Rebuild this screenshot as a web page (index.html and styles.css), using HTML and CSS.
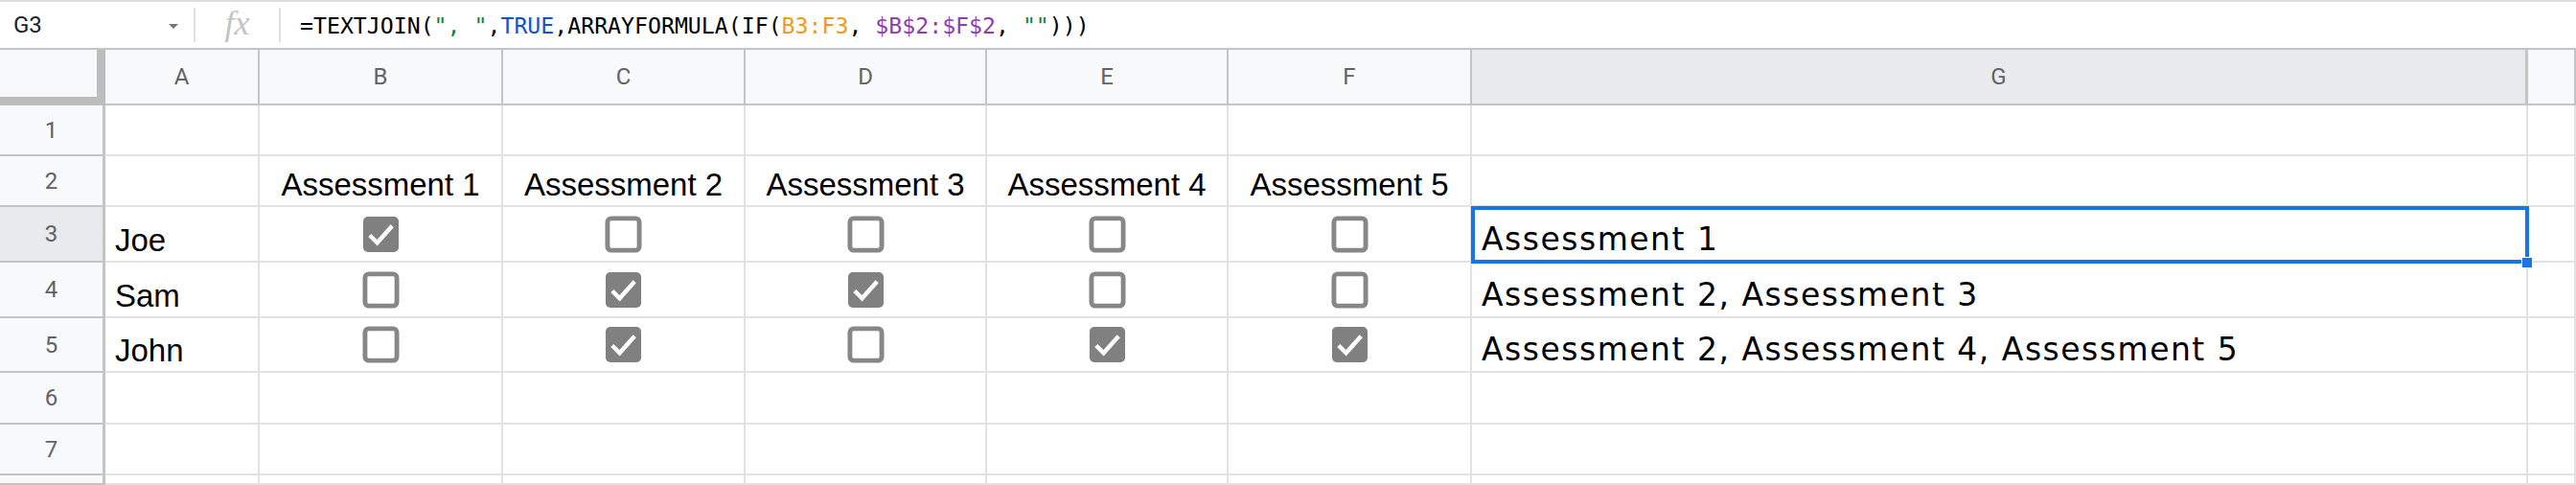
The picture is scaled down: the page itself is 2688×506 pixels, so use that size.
FILE: index.html
```html
<!DOCTYPE html>
<html lang="en">
<head>
  <meta charset="UTF-8">
  <title>Sheet - TEXTJOIN</title>
  <link rel="stylesheet" href="styles.css">
</head>
<body>
  <div class="formula-bar">
    <div class="name-box">
      <span class="cell-ref">G3</span>
      <span class="caret"></span>
    </div>
    <div class="sep"></div>
    <div class="fx">fx</div>
    <div class="sep"></div>
    <div class="formula">=TEXTJOIN(<span class="str">", "</span>,<span class="bool">TRUE</span>,ARRAYFORMULA(IF(<span class="rng1">B3:F3</span>, <span class="rng2">$B$2:$F$2</span>, <span class="str">""</span>)))</div>
  </div>

  <div class="sheet">
    <!-- column headers -->
    <div class="corner"></div>
    <div class="col-head">A</div>
    <div class="col-head">B</div>
    <div class="col-head">C</div>
    <div class="col-head">D</div>
    <div class="col-head">E</div>
    <div class="col-head">F</div>
    <div class="col-head selected">G</div>
    <div class="col-head"></div>

    <!-- row 1 -->
    <div class="row-head">1</div>
    <div class="cell"></div><div class="cell"></div><div class="cell"></div><div class="cell"></div>
    <div class="cell"></div><div class="cell"></div><div class="cell"></div><div class="cell"></div>

    <!-- row 2 -->
    <div class="row-head">2</div>
    <div class="cell"></div>
    <div class="cell center">Assessment 1</div>
    <div class="cell center">Assessment 2</div>
    <div class="cell center">Assessment 3</div>
    <div class="cell center">Assessment 4</div>
    <div class="cell center">Assessment 5</div>
    <div class="cell"></div>
    <div class="cell"></div>

    <!-- row 3 -->
    <div class="row-head selected">3</div>
    <div class="cell">Joe</div>
    <div class="cell box"><svg class="cb" viewBox="0 0 40 40"><rect x="1" y="1" width="38" height="38" rx="5" fill="#808080"/><path d="M8 21 L16 29 L32 11" fill="none" stroke="#fff" stroke-width="4.5"/></svg></div>
    <div class="cell box"><svg class="cb" viewBox="0 0 40 40"><rect x="3" y="3" width="34" height="34" rx="4" fill="#fff" stroke="#878787" stroke-width="5"/></svg></div>
    <div class="cell box"><svg class="cb" viewBox="0 0 40 40"><rect x="3" y="3" width="34" height="34" rx="4" fill="#fff" stroke="#878787" stroke-width="5"/></svg></div>
    <div class="cell box"><svg class="cb" viewBox="0 0 40 40"><rect x="3" y="3" width="34" height="34" rx="4" fill="#fff" stroke="#878787" stroke-width="5"/></svg></div>
    <div class="cell box"><svg class="cb" viewBox="0 0 40 40"><rect x="3" y="3" width="34" height="34" rx="4" fill="#fff" stroke="#878787" stroke-width="5"/></svg></div>
    <div class="cell result active">Assessment 1<span class="handle"></span></div>
    <div class="cell"></div>

    <!-- row 4 -->
    <div class="row-head">4</div>
    <div class="cell">Sam</div>
    <div class="cell box"><svg class="cb" viewBox="0 0 40 40"><rect x="3" y="3" width="34" height="34" rx="4" fill="#fff" stroke="#878787" stroke-width="5"/></svg></div>
    <div class="cell box"><svg class="cb" viewBox="0 0 40 40"><rect x="1" y="1" width="38" height="38" rx="5" fill="#808080"/><path d="M8 21 L16 29 L32 11" fill="none" stroke="#fff" stroke-width="4.5"/></svg></div>
    <div class="cell box"><svg class="cb" viewBox="0 0 40 40"><rect x="1" y="1" width="38" height="38" rx="5" fill="#808080"/><path d="M8 21 L16 29 L32 11" fill="none" stroke="#fff" stroke-width="4.5"/></svg></div>
    <div class="cell box"><svg class="cb" viewBox="0 0 40 40"><rect x="3" y="3" width="34" height="34" rx="4" fill="#fff" stroke="#878787" stroke-width="5"/></svg></div>
    <div class="cell box"><svg class="cb" viewBox="0 0 40 40"><rect x="3" y="3" width="34" height="34" rx="4" fill="#fff" stroke="#878787" stroke-width="5"/></svg></div>
    <div class="cell result">Assessment 2, Assessment 3</div>
    <div class="cell"></div>

    <!-- row 5 -->
    <div class="row-head">5</div>
    <div class="cell">John</div>
    <div class="cell box"><svg class="cb" viewBox="0 0 40 40"><rect x="3" y="3" width="34" height="34" rx="4" fill="#fff" stroke="#878787" stroke-width="5"/></svg></div>
    <div class="cell box"><svg class="cb" viewBox="0 0 40 40"><rect x="1" y="1" width="38" height="38" rx="5" fill="#808080"/><path d="M8 21 L16 29 L32 11" fill="none" stroke="#fff" stroke-width="4.5"/></svg></div>
    <div class="cell box"><svg class="cb" viewBox="0 0 40 40"><rect x="3" y="3" width="34" height="34" rx="4" fill="#fff" stroke="#878787" stroke-width="5"/></svg></div>
    <div class="cell box"><svg class="cb" viewBox="0 0 40 40"><rect x="1" y="1" width="38" height="38" rx="5" fill="#808080"/><path d="M8 21 L16 29 L32 11" fill="none" stroke="#fff" stroke-width="4.5"/></svg></div>
    <div class="cell box"><svg class="cb" viewBox="0 0 40 40"><rect x="1" y="1" width="38" height="38" rx="5" fill="#808080"/><path d="M8 21 L16 29 L32 11" fill="none" stroke="#fff" stroke-width="4.5"/></svg></div>
    <div class="cell result">Assessment 2, Assessment 4, Assessment 5</div>
    <div class="cell"></div>

    <!-- row 6 -->
    <div class="row-head">6</div>
    <div class="cell"></div><div class="cell"></div><div class="cell"></div><div class="cell"></div>
    <div class="cell"></div><div class="cell"></div><div class="cell"></div><div class="cell"></div>

    <!-- row 7 -->
    <div class="row-head">7</div>
    <div class="cell"></div><div class="cell"></div><div class="cell"></div><div class="cell"></div>
    <div class="cell"></div><div class="cell"></div><div class="cell"></div><div class="cell"></div>

    <!-- row 8 -->
    <div class="row-head"></div>
    <div class="cell"></div><div class="cell"></div><div class="cell"></div><div class="cell"></div>
    <div class="cell"></div><div class="cell"></div><div class="cell"></div><div class="cell"></div>
  </div>
</body>
</html>
```

FILE: styles.css
```css
* {
  box-sizing: border-box;
}
html, body {
  margin: 0;
  height: 506px;
  overflow: hidden;
  background: #fff;
}
body {
  font-family: "Liberation Sans", Arial, sans-serif;
}

/* formula bar */
.formula-bar {
  height: 52px;
  display: flex;
  align-items: center;
  border-top: 2px solid #dcdbe3;
  border-bottom: 2px solid #c4c4c4;
}
.name-box {
  width: 202px;
  display: flex;
  align-items: center;
  justify-content: space-between;
  padding: 0 16px 0 14px;
}
.cell-ref {
  font-family: Roboto, "Liberation Sans", sans-serif;
  font-size: 24px;
  color: #202124;
}
.caret {
  width: 0;
  height: 0;
  border-left: 5px solid transparent;
  border-right: 5px solid transparent;
  border-top: 5px solid #757575;
  margin-top: 2px;
}
.sep {
  width: 2px;
  height: 36px;
  background: #e0e0e0;
}
.fx {
  width: 87px;
  text-align: center;
  font-family: "Liberation Serif", serif;
  font-style: italic;
  font-size: 36px;
  color: #c3c3c3;
  line-height: 1;
  margin-top: -4px;
}
.formula {
  padding-left: 20px;
  font-family: "DejaVu Sans Mono", monospace;
  font-size: 23.2px;
  color: #000;
  white-space: pre;
}
.str { color: #188038; }
.bool { color: #1155cc; }
.rng1 { color: #f7981d; }
.rng2 { color: #8f3db0; }

/* grid */
.sheet {
  display: grid;
  grid-template-columns: 110px 161px 254px 253px 252px 252px 254px 1102px 1fr;
  grid-template-rows: 58px 53px 53px 58px 58px 57px 54px 53px 10px;
}
.corner {
  background: #f8f9fa;
  border-right: 9px solid #bdbdbd;
  border-bottom: 9px solid #bdbdbd;
}
.col-head {
  background: #f8f9fa;
  border-right: 2px solid #c4c4c4;
  border-bottom: 2px solid #c4c4c4;
  display: flex;
  align-items: center;
  justify-content: center;
  font-family: Roboto, "Liberation Sans", sans-serif;
  font-size: 24px;
  color: #5f6368;
}
.col-head.selected {
  background: #e8eaed;
  border-right-width: 3px;
}
.row-head {
  background: #f8f9fa;
  border-right: 3px solid #c4c4c4;
  border-bottom: 2px solid #c4c4c4;
  display: flex;
  align-items: center;
  justify-content: center;
  font-family: Roboto, "Liberation Sans", sans-serif;
  font-size: 24px;
  color: #5f6368;
}
.row-head.selected {
  background: #e8eaed;
}
.cell {
  border-right: 2px solid #e2e2e2;
  border-bottom: 2px solid #e2e2e2;
  display: flex;
  align-items: flex-end;
  padding: 0 8px 2px 10px;
  font-size: 33px;
  color: #000;
  white-space: nowrap;
  position: relative;
}
.cell.center {
  justify-content: center;
  padding-left: 0;
  padding-right: 0;
}
.cell.box {
  align-items: center;
  justify-content: center;
  padding: 0;
}
.cb {
  width: 39px;
  height: 39px;
}
.cell.result {
  font-family: "DejaVu Sans", sans-serif;
  font-size: 33px;
  letter-spacing: 1.5px;
  padding-left: 10px;
  padding-bottom: 3px;
  overflow: visible;
}
.cell.active {
  outline: 4px solid #1a73e8;
  outline-offset: -3px;
  z-index: 2;
}
.handle {
  position: absolute;
  right: -7px;
  bottom: -8px;
  width: 12px;
  height: 12px;
  background: #1a73e8;
  border: 1px solid #fff;
}
```
